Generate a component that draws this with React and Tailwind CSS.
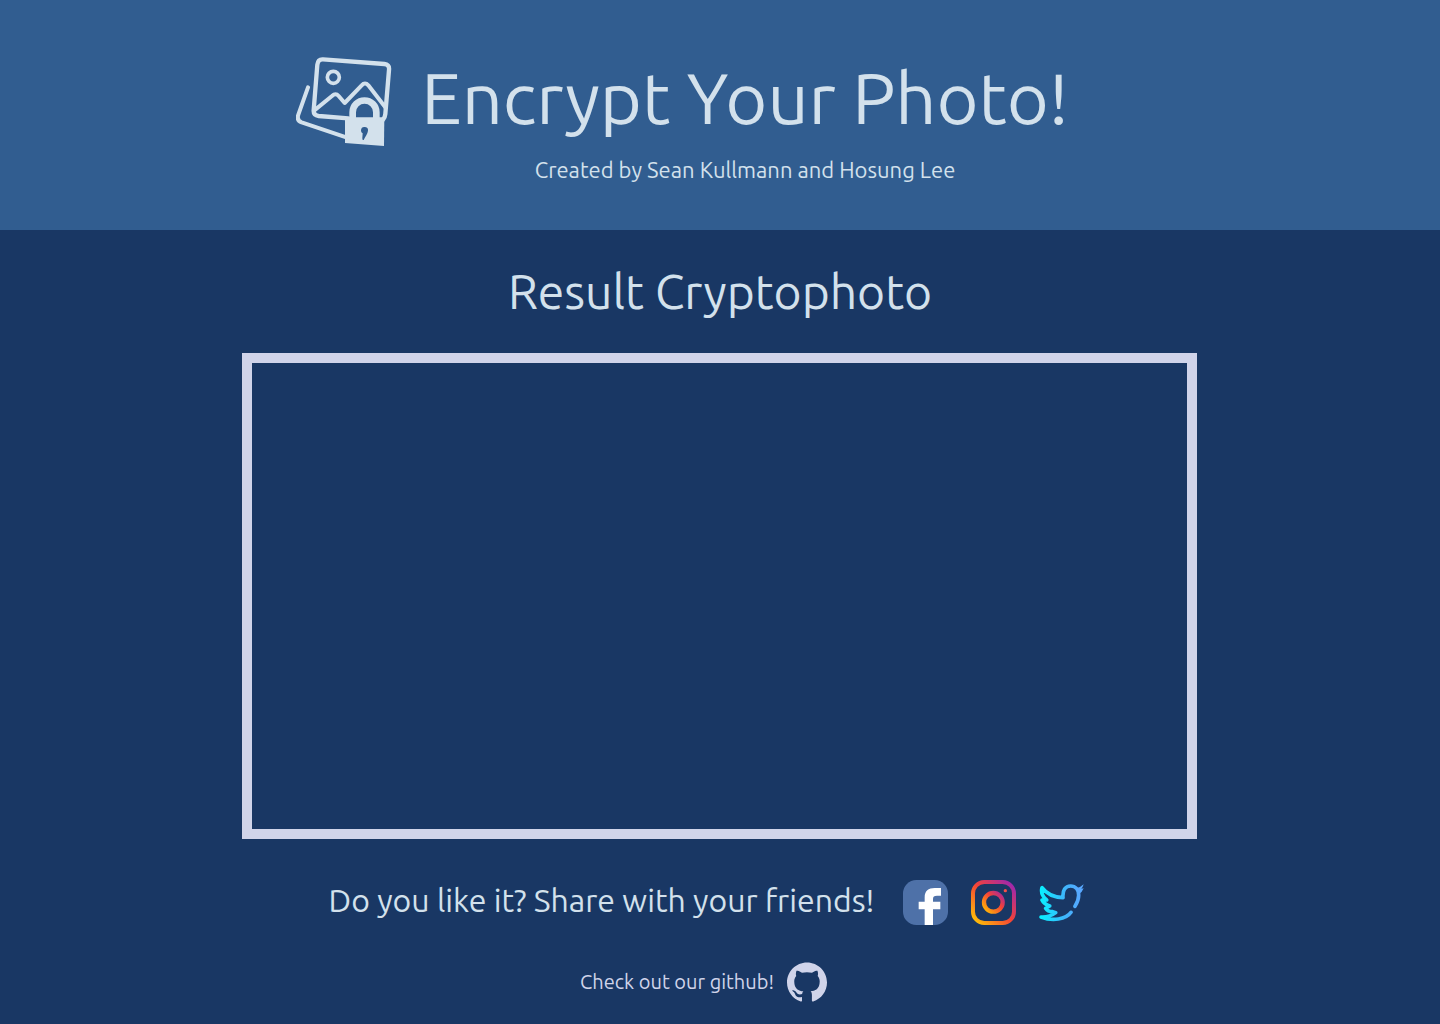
import { SiGithub } from "react-icons/si";

function PhotoLockLogo() {
  return (
    <svg
      viewBox="33 33 288 270"
      className="h-[90px] w-24 shrink-0"
      fill="none"
      stroke="currentColor"
      strokeLinecap="round"
      strokeLinejoin="round"
      aria-hidden="true"
    >
      <path strokeWidth="12" d="M69 127 40 209Q34 226 50 232L184 277" />
      <path
        strokeWidth="13"
        d="M190 220 101 213Q85 211 86 196L97 59Q99 42 114 43L298 57Q314 59 312 75L301 207Q300 218 294 224"
      />
      <circle cx="145" cy="97" r="18" strokeWidth="11" />
      <path strokeWidth="12" d="M88 196 141 153Q152 143 161 153L179 174 230 121Q240 110 250 121L302 188" />
      <path strokeWidth="20" strokeLinecap="butt" d="M203 224V202a35.500 35.500 0 0 1 71 0V224" />
      <path fill="currentColor" stroke="none" d="M180 217H298L297 303 180 294Z" />
      <path
        className="fill-[#315d90]"
        stroke="none"
        d="M228 256C228 248 234 245 239 246C246 246 250 250 249 257C248 266 241 274 236 285C233 286 232 283 232 279L233 265C230 264 228 260 228 256Z"
      />
    </svg>
  );
}

function FacebookIcon() {
  return (
    <svg viewBox="0 0 135 135" className="size-[45px]" aria-hidden="true">
      <rect width="135" height="135" rx="40" fill="#4e71a8" />
      <path
        fill="#fff"
        d="M65 135V88H47V65H65V52C65 33 76 24 95 24H114V47H102C93 47 90 50 90 57V65H112V88H90V135Z"
      />
    </svg>
  );
}

function InstagramIcon() {
  return (
    <svg viewBox="0 0 135 135" className="size-[45px]" fill="none" aria-hidden="true">
      <defs>
        <linearGradient id="insta" x1="10" y1="125" x2="125" y2="10" gradientUnits="userSpaceOnUse">
          <stop offset="0" stopColor="#ffc107" />
          <stop offset="0.5" stopColor="#f44336" />
          <stop offset="1" stopColor="#9c27b0" />
        </linearGradient>
        <linearGradient id="instaLens" x1="43" y1="92" x2="92" y2="43" gradientUnits="userSpaceOnUse">
          <stop offset="0" stopColor="#ffb107" />
          <stop offset="0.6" stopColor="#f44336" />
          <stop offset="1" stopColor="#b02c90" />
        </linearGradient>
      </defs>
      <rect x="6" y="6" width="123" height="123" rx="34" stroke="url(#insta)" strokeWidth="12" />
      <circle cx="67" cy="67" r="28" stroke="url(#instaLens)" strokeWidth="13" />
      <circle cx="103" cy="32" r="5" fill="#f4504a" />
    </svg>
  );
}

function TwitterIcon() {
  return (
    <svg
      viewBox="26 39 135 117"
      className="h-[39px] w-[45px]"
      fill="none"
      stroke="url(#bird)"
      strokeLinecap="round"
      strokeLinejoin="round"
      aria-hidden="true"
    >
      <defs>
        <linearGradient id="bird" x1="30" y1="0" x2="155" y2="0" gradientUnits="userSpaceOnUse">
          <stop offset="0" stopColor="#08f0ff" />
          <stop offset="0.6" stopColor="#3fb4fb" />
          <stop offset="1" stopColor="#5aa6ff" />
        </linearGradient>
      </defs>
      <path
        strokeWidth="11"
        d="M134 109C141 98 145 88 145 76C145 58 135 48 121 48C105 48 96 61 98 83C70 82 49 72 35 53C31 68 37 80 49 90L35 90C39 99 47 104 58 108L46 115C50 122 57 125 67 125L76 128C63 138 48 142 32 141C66 154 107 149 122 127"
      />
      <path
        fill="#58a8ff"
        stroke="none"
        d="M137 55Q150 53 160 43Q158 51 153 56L160 55Q156 66 146 72Z"
      />
    </svg>
  );
}

export default function App() {
  return (
    <div className="flex min-h-screen flex-col bg-[#193764] font-['Ubuntu','Noto_Sans',sans-serif] text-[#d3e1ec]">
      <header className="flex items-start justify-center gap-6 bg-[#315d90] pt-14 pr-[70px] pb-11">
        <PhotoLockLogo />
        <div className="flex w-[658px] flex-col items-center gap-[14px] whitespace-nowrap">
          <h1 className="text-[72px] leading-[84px] font-[450]">Encrypt Your Photo!</h1>
          <p className="text-[22px] leading-8 font-[450]">Created by Sean Kullmann and Hosung Lee</p>
        </div>
      </header>

      <main className="flex flex-1 flex-col">
        <h2 className="pt-[31px] text-center text-[48px] leading-[60px] font-[450]">Result Cryptophoto</h2>
        <section
          aria-label="Result Cryptophoto"
          className="mt-8 mr-[243px] ml-[242px] flex-1 border-10 border-[#d0d4ea]"
        />
        <div className="mt-10 flex items-start justify-center gap-6 pr-8">
          <p className="w-[554px] text-center text-[32px] leading-[42px] font-[450] whitespace-nowrap">
            Do you like it? Share with your friends!
          </p>
          <nav aria-label="Share" className="flex items-center gap-[23px] pt-px">
            <a href="#facebook" aria-label="Facebook">
              <FacebookIcon />
            </a>
            <a href="#instagram" aria-label="Instagram">
              <InstagramIcon />
            </a>
            <a href="#twitter" aria-label="Twitter">
              <TwitterIcon />
            </a>
          </nav>
        </div>
      </main>

      <footer className="flex justify-center pt-[37px] pr-[34px] pb-[22px] text-[#d0d4ea]">
        <a href="#github" className="flex items-center gap-3 text-[20px] leading-10 font-[450]">
          <span className="w-[196px] text-center whitespace-nowrap">Check out our github!</span>
          <SiGithub className="size-10" aria-hidden="true" />
        </a>
      </footer>
    </div>
  );
}
